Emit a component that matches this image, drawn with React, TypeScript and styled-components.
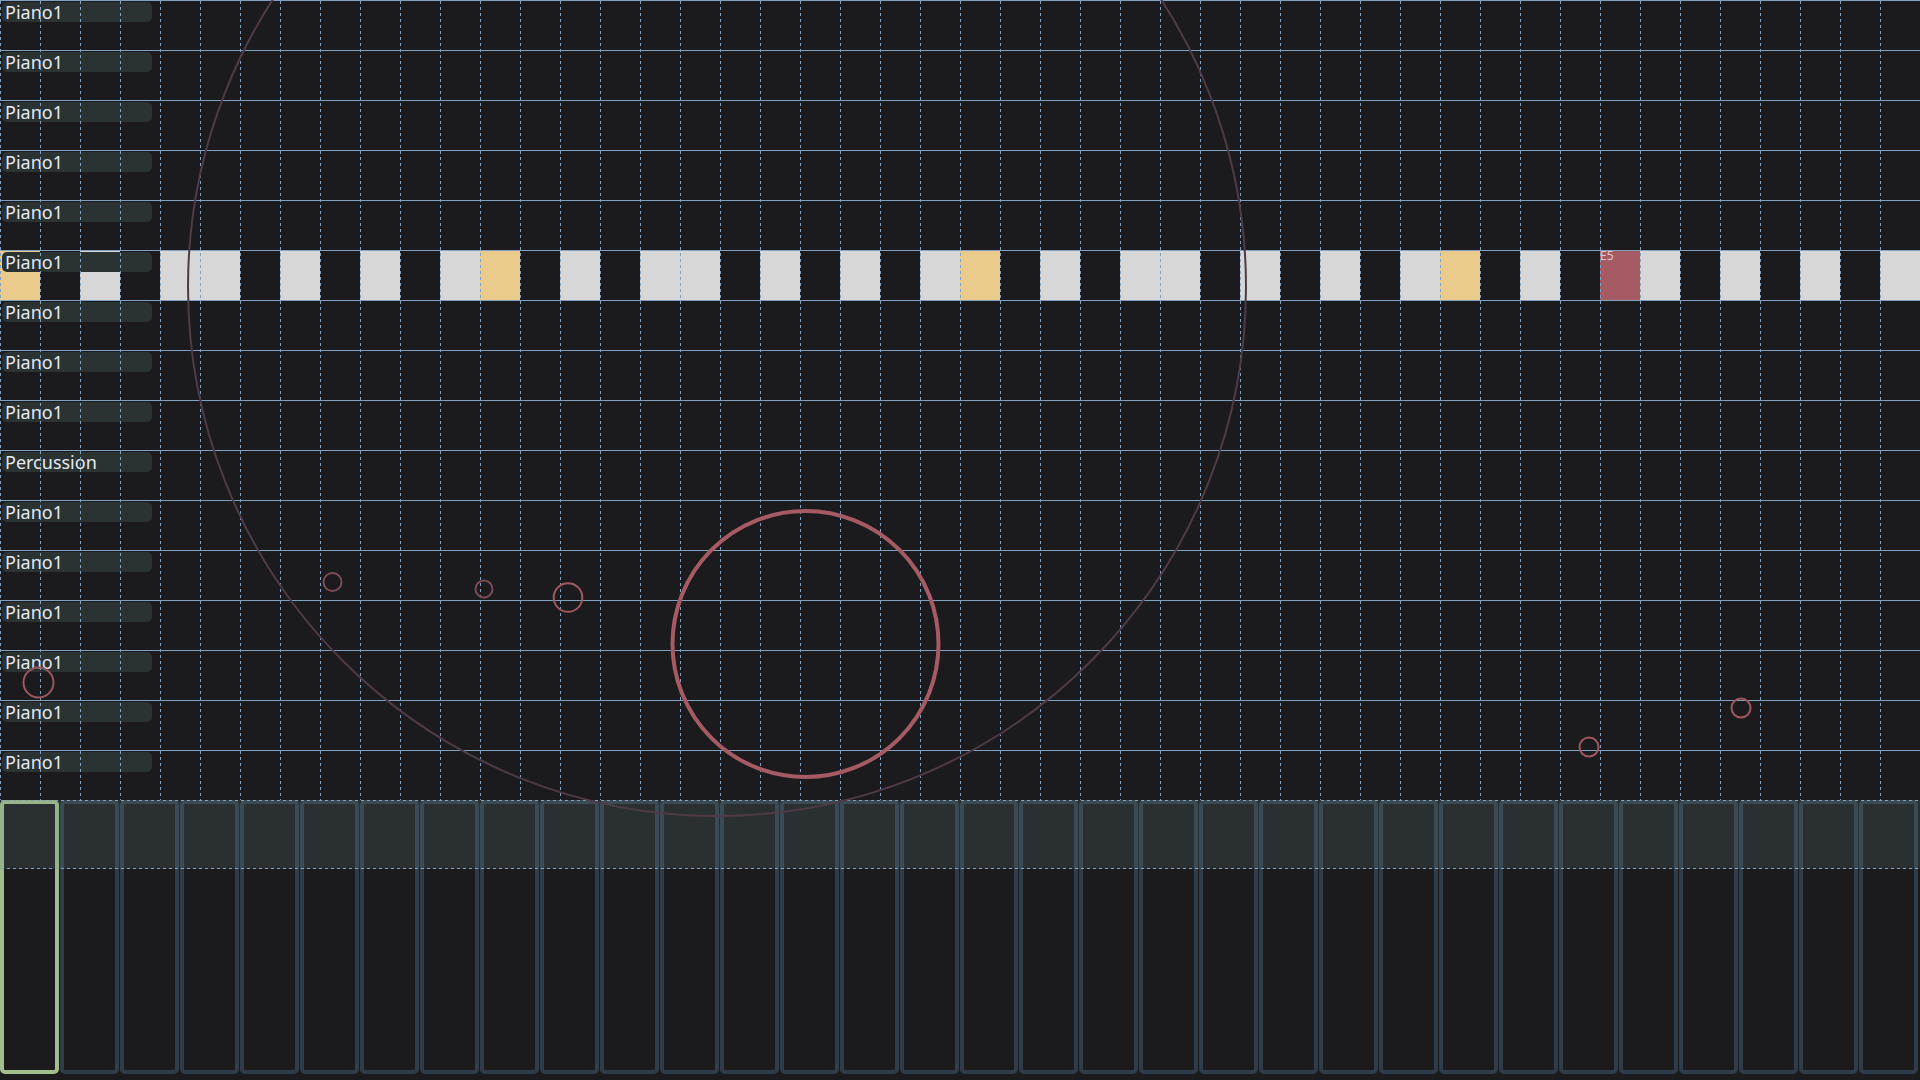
import React from "react";
import styled, { createGlobalStyle } from "styled-components";

const GlobalStyle = createGlobalStyle`
  html, body {
    margin: 0;
    padding: 0;
    background: #1b1b1d;
    overflow: hidden;
  }
  body {
    font-family: "Noto Sans", "DejaVu Sans", sans-serif;
    color: #e5e9f0;
  }
  * { box-sizing: border-box; }
`;

const Stage = styled.div`
  position: relative;
  width: 1920px;
  height: 1080px;
  overflow: hidden;
  display: flex;
  flex-direction: column;
  background: #1b1b1d;
`;

const Tracks = styled.div`
  position: relative;
  display: flex;
  flex-direction: column;
  height: 800px;
  flex: 0 0 800px;
`;

const Row = styled.div`
  height: 50px;
  border-top: 1px solid #81a1c1;
  display: grid;
  grid-template-columns: 1fr;
  grid-template-rows: 1fr;
  & > * {
    grid-area: 1 / 1;
  }
`;

const CellStrip = styled.div`
  display: grid;
  grid-template-columns: repeat(48, 40px);
  height: 100%;
`;

type CellKind = "white" | "black" | "root" | "hit";

const cellColors: Record<CellKind, string> = {
  white: "#d7d7d7",
  black: "transparent",
  root: "#ebcb8b",
  hit: "#a65a63",
};

const Cell = styled.div<{ $kind: CellKind }>`
  background: ${(p) => cellColors[p.$kind]};
  height: 100%;
`;

const NoteName = styled.span`
  display: block;
  font-size: 12px;
  line-height: 10px;
  color: rgba(240, 220, 225, 0.85);
`;

const TrackLabel = styled.div`
  position: relative;
  z-index: 1;
  justify-self: start;
  align-self: start;
  margin: 1px 0 0 2px;
  width: 150px;
  height: 20px;
  border-radius: 5px;
  background: #2b3232;
  color: #e5e9f0;
  font-family: "Noto Sans", sans-serif;
  font-size: 18px;
  line-height: 20px;
  padding-left: 3px;
  white-space: nowrap;
`;

const GridOverlay = styled.div`
  position: absolute;
  inset: 0;
  z-index: 2;
  display: flex;
  pointer-events: none;
`;

const GridLine = styled.div`
  flex: 0 0 40px;
  height: 100%;
  background-image: linear-gradient(
    to bottom,
    rgba(129, 161, 193, 1) 3px,
    transparent 3px
  );
  background-size: 1px 6px;
  background-repeat: repeat-y;
  background-position: 0 1px;
`;

const Keyboard = styled.div`
  position: relative;
  flex: 1 1 auto;
  display: flex;
  gap: 1px;
  padding-right: 2px;
  align-items: flex-start;
`;

const Key = styled.div<{ $selected?: boolean }>`
  flex: 1 1 0;
  height: 274px;
  border: 4px solid ${(p) => (p.$selected ? "#a3be8c" : "#303c4a")};
  border-radius: 5px;
  background: transparent;
`;

const HitBand = styled.div`
  position: absolute;
  top: 0;
  left: 0;
  right: 0;
  height: 69px;
  background-color: rgba(107, 137, 129, 0.2);
  background-image: linear-gradient(to right, #81a1c1 3px, transparent 3px),
    linear-gradient(to right, #81a1c1 3px, transparent 3px);
  background-size: 6px 1px, 6px 1px;
  background-repeat: repeat-x, repeat-x;
  background-position: 1px 0, 1px 100%;
  pointer-events: none;
`;

const CircleLayer = styled.svg`
  position: absolute;
  top: 0;
  left: 0;
  z-index: 3;
  width: 1920px;
  height: 1080px;
  pointer-events: none;
`;

const tracks = Array.from({ length: 16 }, (_, i) =>
  i === 9 ? "Percussion" : "Piano1"
);
const ACTIVE_ROW = 5;
const blackSteps = new Set([1, 3, 6, 8, 10]);

function cellKind(i: number): CellKind {
  if (i === 40) return "hit";
  const step = i % 12;
  if (step === 0) return "root";
  return blackSteps.has(step) ? "black" : "white";
}

const rings = [
  { cx: 717, cy: 287, r: 529, w: 2, c: "#4e3b47" },
  { cx: 805.5, cy: 644, r: 133, w: 4, c: "#a65a63" },
  { cx: 332.5, cy: 582, r: 9, w: 2, c: "#7c4b55" },
  { cx: 484, cy: 589, r: 8.5, w: 2, c: "#7a4a54" },
  { cx: 568, cy: 597.5, r: 14.3, w: 2, c: "#a05861" },
  { cx: 38.5, cy: 682.5, r: 15, w: 2, c: "#9c5660" },
  { cx: 1589, cy: 747, r: 9.5, w: 2, c: "#a05660" },
  { cx: 1741, cy: 708, r: 9.5, w: 2, c: "#a05660" },
];

export default function App() {
  return (
    <>
      <GlobalStyle />
      <Stage>
        <Tracks>
          {tracks.map((name, r) => (
            <Row key={r}>
              {r === ACTIVE_ROW && (
                <CellStrip>
                  {Array.from({ length: 48 }, (_, i) => {
                    const kind = cellKind(i);
                    return (
                      <Cell key={i} $kind={kind}>
                        {kind === "hit" && <NoteName>E5</NoteName>}
                      </Cell>
                    );
                  })}
                </CellStrip>
              )}
              <TrackLabel>{name}</TrackLabel>
            </Row>
          ))}
          <GridOverlay>
            {Array.from({ length: 48 }, (_, i) => (
              <GridLine key={i} />
            ))}
          </GridOverlay>
        </Tracks>
        <Keyboard>
          {Array.from({ length: 32 }, (_, i) => (
            <Key key={i} $selected={i === 0} />
          ))}
          <HitBand />
        </Keyboard>
        <CircleLayer viewBox="0 0 1920 1080">
          {rings.map((c, i) => (
            <circle
              key={i}
              cx={c.cx}
              cy={c.cy}
              r={c.r}
              fill="none"
              stroke={c.c}
              strokeWidth={c.w}
            />
          ))}
        </CircleLayer>
      </Stage>
    </>
  );
}
